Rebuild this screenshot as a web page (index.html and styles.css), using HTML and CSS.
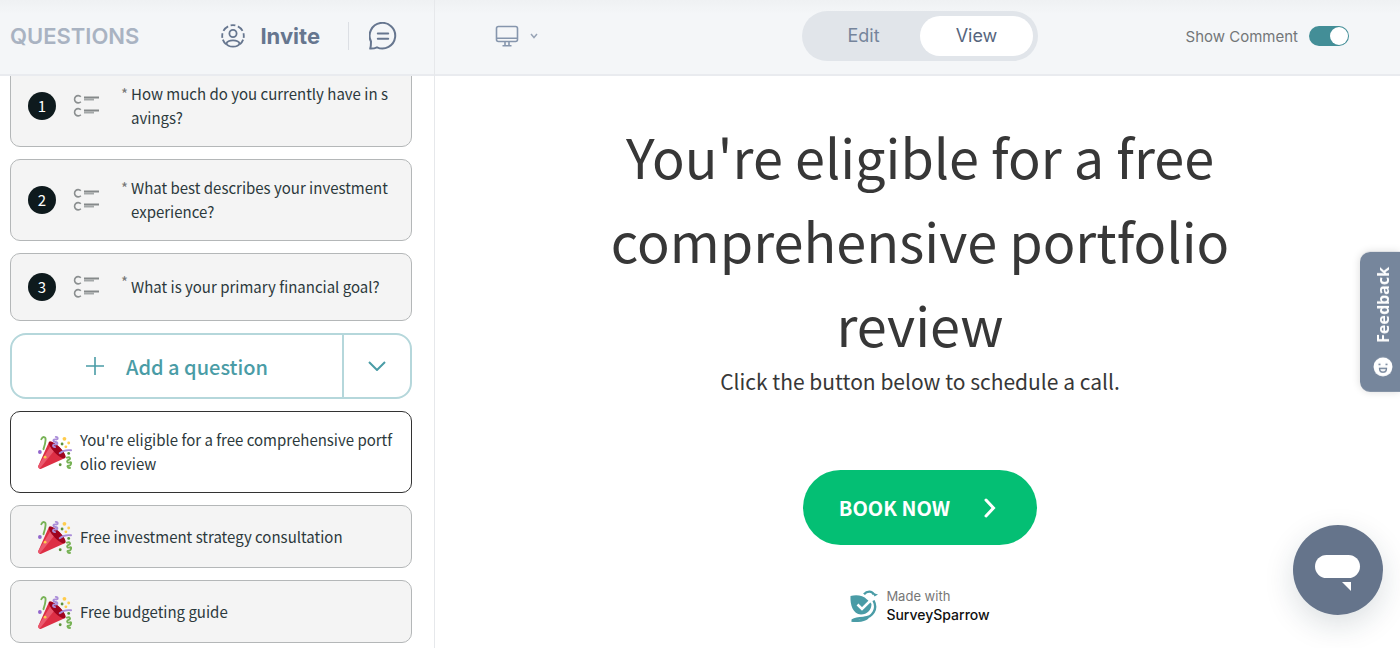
FILE: index.html
```html
<!DOCTYPE html>
<html lang="en">
<head>
  <meta charset="UTF-8" />
  <meta name="viewport" content="width=device-width, initial-scale=1.0"/>
  <title>Survey Builder</title>
  <link rel="stylesheet" href="styles.css">
</head>
<body>

  <!-- shared icons -->
  <svg class="sprite" aria-hidden="true">
    <symbol id="choices" viewBox="0 0 26 24" fill="none">
      <path d="M7.800 2.800A3.600 3.600 0 1 0 7.800 7.700M7.800 15.800A3.600 3.600 0 1 0 7.800 20.700" stroke="#8b8f90" stroke-width="1.600"/>
      <path d="M11 3.500H26M11 16.500H26" stroke="#85898a" stroke-width="1.800"/>
      <path d="M11 5.500H21M11 18.500H21" stroke="#a3a7a8" stroke-width="1.800"/>
    </symbol>
    <symbol id="party" viewBox="0 0 36 36">
      <path fill="#DD2E44" d="M11.626 7.488c-.112.112-.197.247-.268.395l-.008-.008L.134 33.141l.011.011c-.208.403.14 1.223.853 1.937.713.713 1.533 1.061 1.936.853l.01.01L28.21 24.735l-.008-.009c.147-.07.282-.155.395-.269 1.562-1.562-.971-6.627-5.656-11.313-4.687-4.686-9.752-7.218-11.315-5.656z"/>
      <path fill="#EA596E" d="M13 12L.416 32.506l-.282.635.011.011c-.208.403.14 1.223.853 1.937.232.232.473.408.709.557L17 17l-4-5z"/>
      <path fill="#A0041E" d="M23.012 13.066c4.67 4.672 7.263 9.652 5.789 11.124-1.473 1.474-6.453-1.118-11.126-5.788-4.671-4.672-7.263-9.654-5.79-11.127 1.474-1.473 6.454 1.119 11.127 5.791z"/>
      <g fill="none" stroke-width="2" stroke-linecap="round">
        <path stroke="#AA8DD8" d="M18 12.800c-3-.3-2.600-3.200.3-2.800s3-2.200.1-2.600-2.700-3.100.2-2.700 3-2.300.2-2.700"/>
        <path stroke="#AA8DD8" d="M23 19.200c3-2.300 7.500-3.600 12-3"/>
        <path stroke="#77B255" d="M3.500 4.500C5 1 8.500 1.500 8 5.500 7.800 8.500 7 11.500 5.800 15"/>
        <path stroke="#77B255" d="M30.700 24c3-1.500 4.500 1.300 1.700 2.400s-1.200 3.600 1.400 2.500.8 4.400-1.300 3.600-1.500 3 1.500 2.300"/>
      </g>
      <g fill="#5C913B"><circle cx="25.500" cy="9.500" r="1.500"/><circle cx="32.500" cy="19.500" r="1.500"/><circle cx="23.500" cy="31.500" r="1.500"/></g>
      <circle fill="#9266CC" cx="2" cy="18" r="2"/>
      <g fill="#FFCC4D"><circle cx="28" cy="4" r="2"/><circle cx="32.500" cy="8.500" r="1.500"/><circle cx="29.500" cy="12.500" r="1.500"/><circle cx="7.500" cy="23.500" r="1.500"/></g>
    </symbol>
  </svg>

  <div class="app">
    <aside class="sidebar">
      <header class="sidebar-header">
        <h2>QUESTIONS</h2>
        <button class="invite" type="button">
          <svg width="24" height="24" viewBox="0 0 24 24" fill="none" stroke="currentColor" stroke-width="1.800">
            <circle cx="12" cy="12" r="10.800" pathLength="360" stroke-dasharray="13 14 35 13 25 10 30 80 30 10 25 13 35 14 13 0" transform="rotate(-90 12 12)"/>
            <circle cx="12" cy="9.500" r="3.600"/>
            <ellipse cx="12" cy="19.500" rx="6.400" ry="3.200"/>
          </svg>
          Invite
        </button>
        <button class="comments" type="button" aria-label="Comments">
          <svg width="28" height="28" viewBox="0 0 28 28" fill="none" stroke="currentColor" stroke-width="2" stroke-linejoin="round" stroke-linecap="round">
            <path d="M1.200 26.600C2 24.500 2 22.500 2 19.500A12.800 12.800 0 1 1 8 25.300C6 26.300 3.600 26.700 1.200 26.600Z"/>
            <path d="M8.800 11.500H19.200M8.800 16.700H19.200"/>
          </svg>
        </button>
      </header>

      <div class="cards">
        <article class="card question">
          <span class="number">1</span>
          <svg class="type" width="26" height="24"><use href="#choices"/></svg>
          <span class="required">*</span>
          <p>How much do you currently have in savings?</p>
        </article>
        <article class="card question">
          <span class="number">2</span>
          <svg class="type" width="26" height="24"><use href="#choices"/></svg>
          <span class="required">*</span>
          <p>What best describes your investment experience?</p>
        </article>
        <article class="card question">
          <span class="number">3</span>
          <svg class="type" width="26" height="24"><use href="#choices"/></svg>
          <span class="required">*</span>
          <p>What is your primary financial goal?</p>
        </article>

        <div class="add">
          <button class="add-main" type="button">
            <svg width="18" height="18" viewBox="0 0 18 18" stroke="currentColor" stroke-width="1.600"><path d="M9 0V18M0 9H18"/></svg>
            Add a question
          </button>
          <button class="add-more" type="button" aria-label="More question types">
            <svg width="18" height="10" viewBox="0 0 18 10" fill="none" stroke="currentColor" stroke-width="2"><path d="M1 1L9 9L17 1"/></svg>
          </button>
        </div>

        <article class="card ending active">
          <svg width="34" height="34"><use href="#party"/></svg>
          <p>You're eligible for a free comprehensive portfolio review</p>
        </article>
        <article class="card ending">
          <svg width="34" height="34"><use href="#party"/></svg>
          <p>Free investment strategy consultation</p>
        </article>
        <article class="card ending">
          <svg width="34" height="34"><use href="#party"/></svg>
          <p>Free budgeting guide</p>
        </article>
      </div>
    </aside>

    <main class="preview">
      <header class="toolbar">
        <button class="device" type="button" aria-label="Device">
          <svg width="24" height="22" viewBox="0 0 24 22" fill="none" stroke="#8696ad" stroke-width="1.600">
            <rect x="1.500" y="1.500" width="21" height="15" rx="2"/>
            <path d="M1.500 13.300H22.500M10 16.500V20.500M14 16.500V20.500M7.500 20.700H16.500"/>
          </svg>
          <svg width="8" height="6" viewBox="0 0 8 6" fill="none" stroke="#98a4b6" stroke-width="1.500"><path d="M1 1L4 4.500L7 1"/></svg>
        </button>
        <div class="mode">
          <button type="button">Edit</button>
          <button type="button" class="selected">View</button>
        </div>
        <label class="show-comment">
          Show Comment
          <input type="checkbox" role="switch" checked>
        </label>
      </header>

      <section class="ending-screen">
        <h1>You're eligible for a free comprehensive portfolio review</h1>
        <p class="subtitle">Click the button below to schedule a call.</p>
        <button class="book" type="button">
          BOOK NOW
          <svg width="12" height="20" viewBox="0 0 12 20" fill="none" stroke="#fff" stroke-width="3" stroke-linecap="round"><path d="M2 2L9.500 10L2 18"/></svg>
        </button>
        <a class="brand" href="#">
          <svg width="28" height="32" viewBox="0 0 28 32" fill="none">
            <path fill="#4a9ca6" d="M.5 6C6 4.800 13 5 17 9.500L20 12 21.500 14C21.500 20 17 24.500 11 24.500 3 24 0 15 .5 6Z"/>
            <path stroke="#fff" stroke-width="2.600" d="M7.500 14.500L12 19L21.500 9.500"/>
            <path stroke="#4a9ca6" stroke-width="2.400" d="M14 4.200C17 .8 22 .6 23.800 4.600M23.500 10.500C28 19 22.500 27.500 14 27.800 9 28 6 28 2.500 30.300M1.500 30.500C9 31.500 14 30.500 18 27.500"/>
            <path fill="#4a9ca6" d="M22.500 2.800L28 4.600 24.500 6.500Z"/>
          </svg>
          <span class="brand-text"><small>Made with</small><strong>SurveySparrow</strong></span>
        </a>
      </section>
    </main>
  </div>

  <button class="feedback" type="button">
    <svg width="20" height="20" viewBox="0 0 20 20" fill="none">
      <circle cx="10" cy="10" r="9.500" fill="#fff"/>
      <path d="M5.500 7.500H7.500M12.500 7.500H14.500" stroke="#76869c" stroke-width="1.500"/>
      <path d="M6.500 11.500H13.500C13.500 16.500 6.500 16.500 6.500 11.500Z" stroke="#76869c" stroke-width="1.300"/>
    </svg>
    Feedback
  </button>

  <button class="chat" type="button" aria-label="Open chat">
    <svg width="46" height="36" viewBox="0 0 46 36" fill="#fff">
      <rect width="45" height="23" rx="11.500"/>
      <path d="M27 27H36V36Z"/>
    </svg>
  </button>

</body>
</html>
```

FILE: styles.css
```css
* {
  margin: 0;
  padding: 0;
  box-sizing: border-box;
}

body {
  font-family: "Noto Sans CJK SC", sans-serif;
  color: #2c393c;
  background: #fff;
  overflow: hidden;
}

button {
  font: inherit;
  color: inherit;
  background: none;
  border: none;
  cursor: pointer;
}

svg {
  display: block;
  flex: none;
}

.sprite {
  position: absolute;
  width: 0;
  height: 0;
}

.app {
  display: flex;
  min-height: 100vh;
}

/* sidebar */
.sidebar {
  flex: none;
  width: 435px;
  border-right: 1px solid #e6e8eb;
}

.sidebar-header,
.toolbar {
  position: relative;
  z-index: 1;
  height: 76px;
  padding-bottom: 2px;
  align-items: center;
  background: linear-gradient(#eff1f3, #f4f6f8 14px);
  border-bottom: 2px solid #e9ebef;
  font-family: Inter, sans-serif;
}

.sidebar-header {
  display: flex;
  padding-left: 10px;
  padding-right: 37px;
  color: #66768f;
}

.sidebar-header h2 {
  margin-right: auto;
  font-size: 22px;
  font-weight: 600;
  color: #a9b3c2;
}

.invite {
  display: flex;
  align-items: center;
  gap: 15px;
  font-size: 22px;
  font-weight: 700;
}

.comments {
  margin-left: 28px;
  padding-left: 20px;
  border-left: 1px solid #dcdfe4;
}

.cards {
  display: flex;
  flex-direction: column;
  gap: 12px;
  margin-top: -11px;
  padding: 0 22px 5px 10px;
}

.card {
  display: flex;
  align-items: center;
  min-height: 63px;
  padding: 16px 18px 16px 17px;
  border: 1px solid #b4b7b8;
  border-radius: 10px;
  background: #f4f4f4;
  font-size: 15px;
  line-height: 24px;
}

.card p {
  flex: 1;
  word-break: break-all;
}

.question {
  min-height: 68px;
}

.number {
  width: 28px;
  height: 28px;
  border-radius: 50%;
  background: #0e1a1d;
  color: #fff;
  line-height: 28px;
  text-align: center;
}

.type {
  margin: 0 22px 0 17px;
}

.required {
  align-self: flex-start;
  width: 10px;
  color: #777;
}

.ending {
  padding-left: 27px;
}

.ending svg {
  margin: -4px 8px -4px 0;
}

.active {
  background: #fff;
  border-color: #333;
}

.add {
  display: flex;
  height: 66px;
  border: 2px solid #b5d7db;
  border-radius: 16px;
  color: #4a9ca6;
}

.add-main {
  flex: 1;
  display: flex;
  align-items: center;
  justify-content: center;
  gap: 22px;
  font-size: 20px;
  font-weight: 500;
}

.add-more {
  width: 68px;
  padding-left: 24px;
  border-left: 2px solid #b5d7db;
}

/* preview */
.preview {
  flex: 1;
}

.toolbar {
  display: grid;
  grid-template-columns: 1fr auto 1fr;
  padding-left: 56px;
  padding-right: 51px;
}

.device {
  display: flex;
  align-items: center;
  justify-self: start;
  gap: 11px;
  padding: 4px;
}

.mode {
  display: flex;
  padding: 5px;
  border-radius: 25px;
  background: #e1e5ea;
  font-size: 18px;
  line-height: 40px;
  color: #75849b;
}

.mode button {
  width: 113px;
  border-radius: 20px;
}

.mode .selected {
  background: #fff;
  color: #56657d;
}

.show-comment {
  display: flex;
  align-items: center;
  justify-self: end;
  gap: 11px;
  font-size: 15px;
  color: #737678;
}

.show-comment input {
  appearance: none;
  display: flex;
  justify-content: flex-end;
  width: 40px;
  height: 20px;
  padding: 1px;
  border-radius: 10px;
  background: #438e97;
}

.show-comment input::before {
  content: '';
  width: 18px;
  height: 18px;
  border-radius: 50%;
  background: #fff;
}

.ending-screen {
  display: flex;
  flex-direction: column;
  align-items: center;
  padding: 38px 32px 20px 37px;
  color: #373737;
  text-align: center;
}

.ending-screen h1 {
  max-width: 660px;
  font-size: 54px;
  font-weight: 400;
  line-height: 84px;
}

.subtitle {
  margin-top: 3px;
  font-size: 21px;
  line-height: 24px;
}

.book {
  display: flex;
  align-items: center;
  gap: 34px;
  height: 75px;
  margin-top: 77px;
  padding: 0 41px 0 36px;
  border-radius: 38px;
  background: #04bf74;
  color: #fff;
  font-size: 20px;
  font-weight: 700;
}

.brand {
  display: flex;
  align-items: center;
  gap: 8px;
  margin-top: 42px;
  color: #111;
  font-family: Inter, sans-serif;
  text-align: left;
  text-decoration: none;
}

.brand-text {
  display: grid;
}

.brand small {
  font-size: 13px;
  line-height: 18px;
  color: #777;
}

.brand strong {
  font-size: 14px;
  font-weight: 500;
  line-height: 19px;
}

/* floating widgets */
.feedback {
  position: fixed;
  top: 252px;
  right: 0;
  display: flex;
  align-items: center;
  gap: 14px;
  width: 40px;
  padding: 15px 9px 15px 3px;
  border-radius: 0 10px 10px 0;
  background: #76869c;
  box-shadow: 0 0 8px rgba(0, 0, 0, 0.15);
  color: #fff;
  font-family: "Noto Sans", sans-serif;
  font-size: 16px;
  font-weight: 700;
  writing-mode: vertical-rl;
  transform: rotate(180deg);
}

.feedback svg {
  transform: rotate(180deg);
}

.chat {
  position: fixed;
  right: 17px;
  bottom: 33px;
  width: 90px;
  height: 90px;
  padding: 6px 0 0 22px;
  border-radius: 50%;
  background: #65748b;
  box-shadow: 0 10px 30px rgba(20, 50, 60, 0.15);
}
```
